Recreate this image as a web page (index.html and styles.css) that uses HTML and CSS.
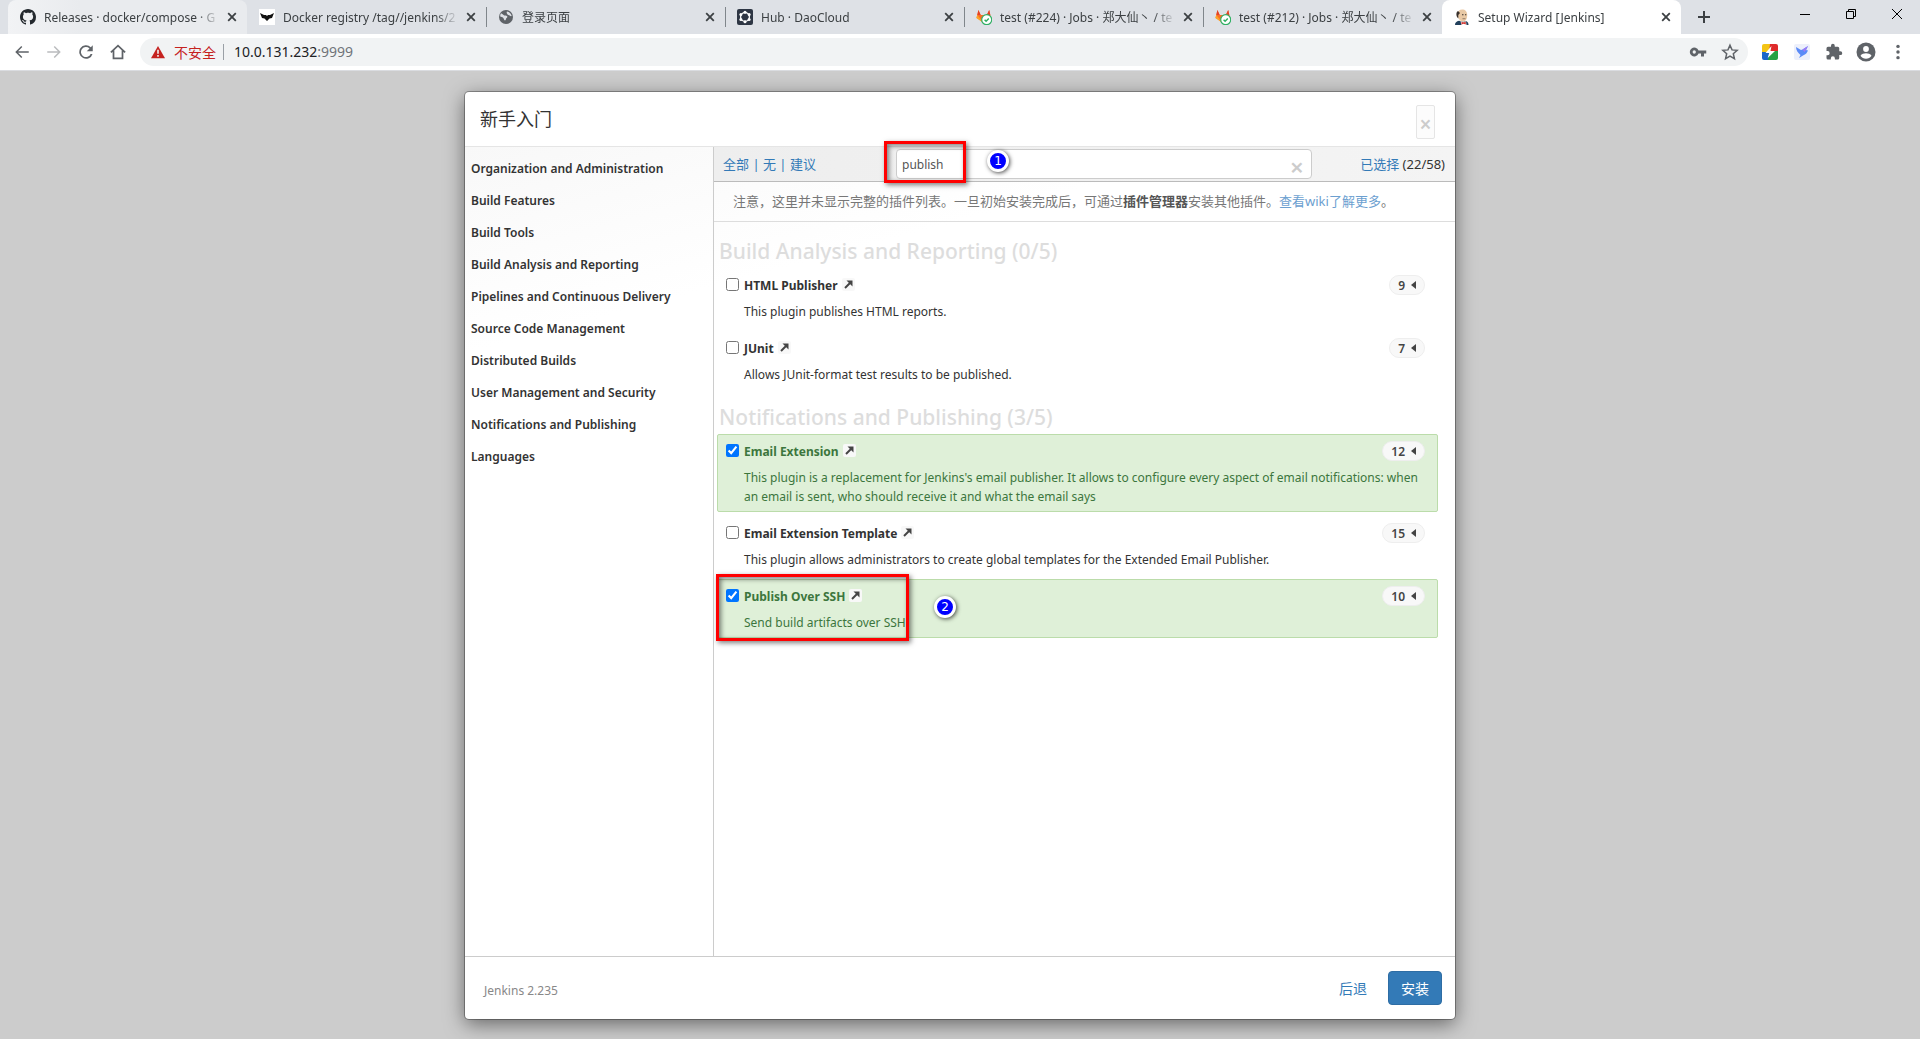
FILE: index.html
```html
<!DOCTYPE html>
<html lang="zh-CN">
<head>
<meta charset="utf-8">
<title>Setup Wizard [Jenkins]</title>
<link rel="stylesheet" href="styles.css">
</head>
<body>
<svg class="sprite" aria-hidden="true">
  <symbol id="i-x" viewBox="0 0 16 16"><path d="M4.2 4.2l7.6 7.6M11.8 4.2l-7.6 7.6" fill="none" stroke="currentColor" stroke-width="1.8"/></symbol>
  <symbol id="i-fox" viewBox="0 0 16 16">
    <path d="M8 14.2L.6 8.8 2.4 1l2.3 5h6.1L13.200 1 15 8.800z" fill="#fc6d26"/>
    <path d="M2.400 1l2.300 5H1.300zM13.200 1l-2.400 5h3.500z" fill="#e24329"/>
    <path d="M1.300 6L.3 9 8 14.200z" fill="#fca326"/>
    <circle cx="10.700" cy="10.700" r="5" fill="#fff" stroke="#31af64" stroke-width="1.200"/>
    <path d="M8.600 10.800l1.500 1.500 2.700-2.800" fill="none" stroke="#31af64" stroke-width="1.500"/>
  </symbol>
  <symbol id="i-arrow" viewBox="0 0 13 13"><path d="M3 10l5.500-5.500" fill="none" stroke="currentColor" stroke-width="2"/><path d="M4.500 2.500h6v6z" fill="currentColor"/></symbol>
</svg>

<header class="browser">
  <div class="tabs">
    <div class="tab tab-hover">
      <svg class="fav" viewBox="0 0 16 16"><path fill="#24292e" d="M8 0C3.580 0 0 3.580 0 8c0 3.540 2.290 6.530 5.470 7.590.4.070.55-.17.55-.38 0-.19-.01-.82-.01-1.490-2.010.37-2.530-.49-2.690-.94-.09-.23-.48-.94-.82-1.130-.28-.15-.68-.52-.01-.53.63-.01 1.080.58 1.230.82.72 1.210 1.870.87 2.330.66.07-.52.28-.87.51-1.070-1.780-.2-3.640-.89-3.640-3.950 0-.87.31-1.590.82-2.150-.08-.2-.36-1.020.08-2.120 0 0 .67-.21 2.200.82.64-.18 1.320-.27 2-.27s1.360.09 2 .27c1.530-1.040 2.200-.82 2.200-.82.44 1.100.16 1.920.08 2.120.51.56.82 1.270.82 2.150 0 3.070-1.870 3.750-3.650 3.950.29.25.54.73.54 1.480 0 1.070-.01 1.930-.01 2.200 0 .21.15.46.55.38A8.010 8.010 0 0016 8c0-4.420-3.580-8-8-8z"/></svg>
      <span class="tab-title">Releases · docker/compose · G</span>
      <button class="tab-close" aria-label="关闭"><svg><use href="#i-x"/></svg></button>
    </div>
    <div class="tab">
      <svg class="fav" viewBox="0 0 16 16"><path fill="#fff" d="M0 0h16v16H0z"/><path fill="#111" d="M1 4l4 2h2l1 1 1-1h2l4-2-2 5-2.500.5L8 12l-2.500-2.500L3 9z"/></svg>
      <span class="tab-title">Docker registry /tag//jenkins/2</span>
      <button class="tab-close" aria-label="关闭"><svg><use href="#i-x"/></svg></button>
    </div>
    <div class="tab tab-line">
      <svg class="fav" viewBox="0 0 16 16"><circle cx="8" cy="8" r="7" fill="#5f6368"/><path fill="#dee1e6" d="M3 4.200C5 5 5.500 6.600 7.600 6.600c2 .2 2.200 1.600 1 2.500-1 .6-.3 2-1.600 2.400C5.800 11 6 9 4.500 8.200L2.200 7.400c-.1-1.200.2-2.300.8-3.200zM9 2.400c2.500.4 4.300 2.300 4.700 4.600-1.300.5-2.200-.6-3.300-.9C9.400 5.600 8 4 9 2.400z"/></svg>
      <span class="tab-title">登录页面</span>
      <button class="tab-close" aria-label="关闭"><svg><use href="#i-x"/></svg></button>
    </div>
    <div class="tab tab-line">
      <svg class="fav" viewBox="0 0 16 16"><rect width="16" height="16" rx="2" fill="#2e3644"/><circle cx="8" cy="8" r="4.400" fill="none" stroke="#fff" stroke-width="1.300"/><g fill="#fff"><circle cx="8" cy="3.200" r="1.500"/><circle cx="8" cy="12.800" r="1.500"/><circle cx="3.900" cy="5.500" r="1.500"/><circle cx="12.100" cy="5.500" r="1.500"/><circle cx="3.900" cy="10.500" r="1.500"/><circle cx="12.100" cy="10.500" r="1.500"/></g></svg>
      <span class="tab-title">Hub · DaoCloud</span>
      <button class="tab-close" aria-label="关闭"><svg><use href="#i-x"/></svg></button>
    </div>
    <div class="tab tab-line">
      <svg class="fav"><use href="#i-fox"/></svg>
      <span class="tab-title">test (#224) · Jobs · 郑大仙丶 / te</span>
      <button class="tab-close" aria-label="关闭"><svg><use href="#i-x"/></svg></button>
    </div>
    <div class="tab tab-line">
      <svg class="fav"><use href="#i-fox"/></svg>
      <span class="tab-title">test (#212) · Jobs · 郑大仙丶 / te</span>
      <button class="tab-close" aria-label="关闭"><svg><use href="#i-x"/></svg></button>
    </div>
    <div class="tab tab-active">
      <svg class="fav" viewBox="0 0 16 16"><path fill="#22405c" d="M1 16c0-2.500 1.500-3.600 4-4.200l4 1 3.500-.6c1.500.8 2 2 2 3.800z"/><path fill="#e9c9a5" d="M3.500 5C3.500 2 5.500.5 8.200.5c3 0 5 2 5 5.500 0 4-1.600 6.500-4 6.500C6 12.500 3.500 9 3.500 5z"/><path fill="#38302c" d="M4 2C2 3 2 6 3 8l1.300 1.500V6L6 4zM8 5.200h1.500v1H8zM11 5.200h1.300v1H11z"/><path fill="#8c7460" d="M8.500 9.300h3v.9h-3z"/><path fill="#fff" d="M6.500 12l3 1.500 2.500-1 .5 3.500h-5z"/><path fill="#d33833" d="M7.500 12.700l2 .8 2.300-.8v2.800l-2.300-.8-2 .8z"/></svg>
      <span class="tab-title">Setup Wizard [Jenkins]</span>
      <button class="tab-close" aria-label="关闭"><svg><use href="#i-x"/></svg></button>
    </div>
    <button class="new-tab" aria-label="新标签页"><svg viewBox="0 0 16 16"><path d="M8 2v12M2 8h12" fill="none" stroke="#3c4043" stroke-width="2"/></svg></button>
    <div class="window-buttons">
      <button aria-label="最小化"><svg viewBox="0 0 12 12"><path d="M1 6.500h10" stroke="#000"/></svg></button>
      <button aria-label="还原"><svg viewBox="0 0 12 12"><path d="M1.500 3.500h7v7h-7zM3.500 3.500v-2h7v7h-2" fill="none" stroke="#000"/></svg></button>
      <button aria-label="关闭窗口"><svg viewBox="0 0 12 12"><path d="M1 1l10 10M11 1L1 11" stroke="#000"/></svg></button>
    </div>
  </div>

  <div class="navbar">
    <button aria-label="后退"><svg viewBox="0 0 24 24"><path fill="#5f6368" d="M21 11H6.800l5.600-5.600L11 4l-8 8 8 8 1.400-1.400L6.800 13H21z"/></svg></button>
    <button aria-label="前进"><svg viewBox="0 0 24 24"><path fill="#babcbe" d="M3 11h14.200l-5.600-5.600L13 4l8 8-8 8-1.400-1.400 5.600-5.600H3z"/></svg></button>
    <button aria-label="重新加载"><svg viewBox="0 0 24 24"><path fill="#5f6368" d="M18.400 5.600A9 9 0 1 0 20.700 14.500h-2.500A6.700 6.700 0 1 1 16.700 7.300L13 11h8V3z"/></svg></button>
    <button aria-label="主页"><svg viewBox="0 0 24 24"><path d="M2.500 12.500L12 3.500l9.500 9M6 10v10.500h12V10" fill="none" stroke="#5f6368" stroke-width="2.300"/></svg></button>
    <div class="omnibox">
      <svg class="warn" viewBox="0 0 16 16"><path fill="#c5221f" d="M8 1l8 14H0z"/><path d="M8 5.500v4.500M8 11.500v2" stroke="#f1f3f4" stroke-width="1.800"/></svg>
      <span class="insecure">不安全</span>
      <div class="url" role="textbox" aria-label="地址"><span>10.0.131.232</span><span class="port">:9999</span></div>
      <button aria-label="密码"><svg viewBox="0 0 24 24"><path fill="#5f6368" d="M12.700 10A6 6 0 1 0 12.700 14H16v4h4v-4h3v-4zM7 14.200a2.200 2.200 0 1 1 0-4.400 2.200 2.200 0 0 1 0 4.400z"/></svg></button>
      <button aria-label="收藏"><svg viewBox="0 0 24 24"><path d="M12 3l2.700 6.200 6.800.6-5.100 4.500 1.500 6.600-5.900-3.500-5.900 3.500 1.500-6.600L2.500 9.800l6.800-.6z" fill="none" stroke="#5f6368" stroke-width="2"/></svg></button>
    </div>
    <button aria-label="扩展一"><svg class="small" viewBox="0 0 16 16"><clipPath id="r"><rect width="16" height="16" rx="2"/></clipPath><g clip-path="url(#r)"><path fill="#f3c415" d="M0 0h9L6 9H0z"/><path fill="#df2b2b" d="M8 0h8v8H7z"/><path fill="#1b66c9" d="M0 8h8v8H0z"/><path fill="#27a243" d="M8 7h8v9H6z"/></g><path fill="#fff" d="M9.500 2L3.500 9h3.700l-1.500 5L13 7H8.500z"/></svg></button>
    <button aria-label="扩展二"><svg class="small" viewBox="0 0 16 16"><rect width="16" height="16" rx="2" fill="#edf0fb"/><path fill="#5b8bf7" d="M2 3l5 3 1.500-.5L14 2l-2 4 2 .5c-1 2-2 4-5 5L5 14l1.500-3C4 9 2 6 2 3z"/><path fill="#9a7bf6" d="M8.500 5.500L14 2l-2 4-1.500 2z"/></svg></button>
    <button aria-label="扩展程序"><svg viewBox="0 0 24 24"><path fill="#5f6368" d="M20.500 11H19V7a2 2 0 0 0-2-2h-4V3.500a2.500 2.500 0 0 0-5 0V5H4a2 2 0 0 0-2 2v3.800h1.500a2.700 2.700 0 0 1 0 5.400H2V20a2 2 0 0 0 2 2h3.800v-1.500a2.700 2.700 0 0 1 5.400 0V22H17a2 2 0 0 0 2-2v-4h1.500a2.500 2.500 0 0 0 0-5z"/></svg></button>
    <button aria-label="个人资料"><svg class="large" viewBox="0 0 20 20"><circle cx="10" cy="10" r="9.500" fill="#5f6368"/><circle cx="10" cy="7" r="2.900" fill="#fff"/><path fill="#fff" d="M4.500 13.700c1-1.800 3.700-2.500 5.500-2.500s4.500.7 5.500 2.500a6.500 6.500 0 0 1-11 0z"/></svg></button>
    <button aria-label="菜单"><svg viewBox="0 0 24 24"><g fill="#5f6368"><circle cx="12" cy="4.500" r="2.300"/><circle cx="12" cy="12" r="2.300"/><circle cx="12" cy="19.500" r="2.300"/></g></svg></button>
  </div>
</header>

<main class="page">
  <section class="modal">
    <header class="modal-head">
      <h1>新手入门</h1>
      <button class="modal-close" aria-label="关闭">×</button>
    </header>

    <div class="modal-body">
      <nav class="categories">
        <a href="#">Organization and Administration</a>
        <a href="#">Build Features</a>
        <a href="#">Build Tools</a>
        <a href="#">Build Analysis and Reporting</a>
        <a href="#">Pipelines and Continuous Delivery</a>
        <a href="#">Source Code Management</a>
        <a href="#">Distributed Builds</a>
        <a href="#">User Management and Security</a>
        <a href="#">Notifications and Publishing</a>
        <a href="#">Languages</a>
      </nav>

      <div class="content">
        <div class="filter">
          <div class="select-links"><a href="#">全部</a> | <a href="#">无</a> | <a href="#">建议</a></div>
          <div class="search">
            <input type="text" value="publish" aria-label="搜索插件">
            <button class="search-clear" aria-label="清除">×</button>
            <span class="mark mark-search"></span>
            <span class="step step-search">1</span>
          </div>
          <div class="selected"><a href="#">已选择</a> (22/58)</div>
        </div>
        <p class="note">注意，这里并未显示完整的插件列表。一旦初始安装完成后，可通过<b>插件管理器</b>安装其他插件。<a href="#">查看wiki了解更多</a>。</p>

        <div class="plugins">
          <h2>Build Analysis and Reporting (0/5)</h2>
          <article class="plugin">
            <div class="plugin-head">
              <input type="checkbox" id="p1"><label for="p1">HTML Publisher</label>
              <a class="ext" href="#" aria-label="HTML Publisher"><svg><use href="#i-arrow"/></svg></a>
              <button class="deps">9<i></i></button>
            </div>
            <p>This plugin publishes HTML reports.</p>
          </article>
          <article class="plugin">
            <div class="plugin-head">
              <input type="checkbox" id="p2"><label for="p2">JUnit</label>
              <a class="ext" href="#" aria-label="JUnit"><svg><use href="#i-arrow"/></svg></a>
              <button class="deps">7<i></i></button>
            </div>
            <p>Allows JUnit-format test results to be published.</p>
          </article>

          <h2>Notifications and Publishing (3/5)</h2>
          <article class="plugin plugin-on">
            <div class="plugin-head">
              <input type="checkbox" id="p3" checked><label for="p3">Email Extension</label>
              <a class="ext" href="#" aria-label="Email Extension"><svg><use href="#i-arrow"/></svg></a>
              <button class="deps">12<i></i></button>
            </div>
            <p>This plugin is a replacement for Jenkins's email publisher. It allows to configure every aspect of email notifications: when an email is sent, who should receive it and what the email says</p>
          </article>
          <article class="plugin">
            <div class="plugin-head">
              <input type="checkbox" id="p4"><label for="p4">Email Extension Template</label>
              <a class="ext" href="#" aria-label="Email Extension Template"><svg><use href="#i-arrow"/></svg></a>
              <button class="deps">15<i></i></button>
            </div>
            <p>This plugin allows administrators to create global templates for the Extended Email Publisher.</p>
          </article>
          <article class="plugin plugin-on">
            <div class="plugin-head">
              <input type="checkbox" id="p5" checked><label for="p5">Publish Over SSH</label>
              <a class="ext" href="#" aria-label="Publish Over SSH"><svg><use href="#i-arrow"/></svg></a>
              <button class="deps">10<i></i></button>
            </div>
            <p>Send build artifacts over SSH</p>
            <span class="mark mark-plugin"></span>
            <span class="step step-plugin">2</span>
          </article>
        </div>
      </div>
    </div>

    <footer class="modal-foot">
      <span class="version">Jenkins 2.235</span>
      <button class="btn btn-link">后退</button>
      <button class="btn btn-primary">安装</button>
    </footer>
  </section>
</main>
</body>
</html>
```

FILE: styles.css
```css
* { box-sizing: border-box; }

body {
  margin: 0;
  min-height: 100vh;
  display: flex;
  flex-direction: column;
  background: #ccc;
  color: #333;
  font: 12px/19px "Noto Sans", "Noto Sans CJK SC", sans-serif;
}

button {
  padding: 0;
  border: 0;
  background: none;
  color: inherit;
  font: inherit;
}

h1, h2, p { margin: 0; }
a { color: #337ab7; text-decoration: none; }
svg { display: block; flex: none; }
.sprite { position: absolute; width: 0; height: 0; }

/* Browser chrome */
.tabs {
  display: flex;
  height: 34px;
  padding-left: 8px;
  background: #dee1e6;
}

.tab {
  display: flex;
  align-items: center;
  flex: 0 1 239px;
  min-width: 0;
  padding: 0 7px 0 12px;
  border-radius: 8px 8px 0 0;
  color: #3c4043;
}

.tab-hover { background: linear-gradient(90deg, #f2f3f5, #e9ebee 30%); }
.tab-active { background: #fff; }
.tab-line { background: linear-gradient(#80868b, #80868b) 0 7px / 1px 20px no-repeat; border-radius: 0; }

.fav { width: 16px; height: 16px; }

.tab-title {
  flex: 1;
  min-width: 0;
  margin: 0 4px 0 8px;
  overflow: hidden;
  white-space: nowrap;
  mask-image: linear-gradient(90deg, #000 calc(100% - 24px), transparent);
}

.tab-close svg { width: 16px; height: 16px; }
.new-tab { width: 46px; }
.new-tab svg { width: 16px; height: 16px; margin: auto; }
.window-buttons { display: flex; margin-left: auto; }
.window-buttons button { width: 46px; padding-bottom: 6px; }
.window-buttons svg { width: 12px; height: 12px; margin: auto; }

.navbar {
  display: flex;
  align-items: center;
  height: 37px;
  padding: 0 6px;
  border-bottom: 1px solid #dadce0;
  background: #fff;
}

.navbar button { flex: none; width: 32px; }
.navbar svg { width: 18px; height: 18px; margin: auto; }
.navbar .small { width: 16px; height: 16px; }
.navbar .large { width: 20px; height: 20px; }

.omnibox {
  display: flex;
  align-items: center;
  flex: 1;
  height: 28px;
  margin: 0 6px;
  padding: 0 2px 0 10px;
  border-radius: 14px;
  background: #f1f3f4;
  font-size: 14px;
}

.omnibox .warn { width: 16px; height: 14px; margin: 0; }
.insecure { margin: 0 7px 0 8px; color: #c5221f; }
.url { flex: 1; padding-left: 10px; border-left: 1px solid #9aa0a6; line-height: 16px; color: #202124; }
.port { color: #70757a; }

/* Setup wizard */
.page {
  display: flex;
  flex: 1;
  justify-content: center;
  padding: 21px 0 20px;
}

.modal {
  display: flex;
  flex-direction: column;
  width: 990px;
  max-width: 100%;
  border-radius: 4px;
  background: #fff;
  box-shadow: 0 0 0 1px rgba(0, 0, 0, .3), 0 5px 20px rgba(0, 0, 0, .5);
}

.modal-head {
  display: flex;
  align-items: center;
  justify-content: space-between;
  height: 55px;
  padding: 0 20px 0 15px;
  border-bottom: 1px solid #e5e5e5;
}

.modal-head h1 { font-size: 18px; font-weight: 400; line-height: 24px; }

.modal-close {
  width: 19px;
  height: 34px;
  margin-top: 6px;
  padding-top: 4px;
  border: 1px solid #e5e5e5;
  border-radius: 2px;
  background: #fcfcfc;
  color: #ccc;
  font-size: 21px;
  font-weight: 600;
}

.modal-body {
  display: flex;
  flex: 1;
  background: linear-gradient(165deg, #f8f8f8, #fff 200px);
}

.categories {
  display: flex;
  flex-direction: column;
  flex: none;
  width: 249px;
  padding-top: 6px;
  border-right: 1px solid #ccc;
}

.categories a {
  padding: 0 6px;
  color: #333;
  font-size: 12px;
  font-weight: 600;
  line-height: 32px;
}

.content { flex: 1; min-width: 0; }

.filter {
  display: grid;
  grid-template-columns: 173px 416px 1fr;
  align-items: center;
  height: 35px;
  padding: 0 10px 0 9px;
  border-bottom: 1px solid #bbb;
  background: linear-gradient(90deg, #eee, #f4f4f4);
}

.filter, .note { font-size: 13px; }
.select-links { color: #337ab7; font-size: 13px; }
.selected { text-align: right; }

.search { position: relative; display: flex; }

.search input {
  width: 100%;
  height: 30px;
  padding: 0 5px;
  border: 1px solid #ccc;
  border-radius: 4px;
  background: #fff;
  color: #555;
  font: 12px "Noto Sans", sans-serif;
}

.search-clear {
  position: absolute;
  top: 8px;
  right: 10px;
  width: 12px;
  color: #ccc;
  font-size: 24px;
  font-weight: 600;
}

.note {
  padding: 10px 19px;
  border-bottom: 1px solid #ddd;
  color: #777;
}

.note b { color: #555; }
.note a { color: #6ca0d0; }

.plugins { padding: 13px 17px 0 3px; }

.plugins h2 {
  padding-left: 2px;
  color: #ddd;
  font-size: 21px;
  font-weight: 500;
  line-height: 33px;
}

.plugins * + h2 { margin-top: 11px; }

.plugin {
  position: relative;
  margin-bottom: 4px;
  padding: 6px 6px 5px 8px;
  border: 1px solid transparent;
  border-radius: 2px;
}

.plugin-on { border-color: #bbdcaa; background: #dff0d8; color: #3c763d; }
.plugin p { margin: 7px 0 0 18px; }

.plugin-head { display: flex; align-items: center; height: 20px; }
.plugin-head input { width: 13px; height: 13px; margin: 0 5px 2px 0; }
.plugin-head label { font-weight: 700; }

.ext {
  margin: 0 auto 1px 4px;
  border-radius: 2px;
  background: #f8f8f8;
  color: #444;
}

.ext svg { width: 13px; height: 13px; }

.deps {
  display: flex;
  align-items: center;
  gap: 6px;
  height: 20px;
  margin-right: 6px;
  padding: 0 8px;
  border: 1px solid #eee;
  border-radius: 10px;
  background: #f8f8f8;
  color: #444;
  font-weight: 600;
}

.deps i {
  border: solid transparent;
  border-width: 4px 5px 4px 0;
  border-right-color: #444;
}

/* Step annotations laid over the wizard */
.mark {
  position: absolute;
  border: 3px solid #f00;
  box-shadow: 2px 2px 5px rgba(0, 0, 0, .5), inset 2px 2px 5px rgba(0, 0, 0, .5);
  pointer-events: none;
}

.mark-search { top: -8px; left: -12px; width: 82px; height: 42px; }
.mark-plugin { top: -6px; left: -2px; width: 193px; height: 67px; }

.step {
  position: absolute;
  width: 22px;
  height: 22px;
  border: 3px solid #fff;
  border-radius: 50%;
  background: #00f;
  box-shadow: 1px 1px 4px rgba(0, 0, 0, .7);
  color: #fff;
  font: 12px/16px "DejaVu Sans", sans-serif;
  text-align: center;
}

.step-search { top: 1px; left: 91px; }
.step-plugin { top: 16px; left: 216px; }

.modal-foot {
  display: flex;
  align-items: center;
  height: 63px;
  padding: 0 13px 0 19px;
  border-top: 1px solid #ccc;
}

.version { margin-right: auto; padding-top: 4px; color: #888; }

.btn {
  height: 34px;
  padding: 0 12px;
  border: 1px solid transparent;
  border-radius: 4px;
  font-size: 14px;
}

.btn-link { margin-right: 8px; color: #337ab7; }
.btn-primary { border-color: #2e6da4; background: #337ab7; color: #fff; }
```
